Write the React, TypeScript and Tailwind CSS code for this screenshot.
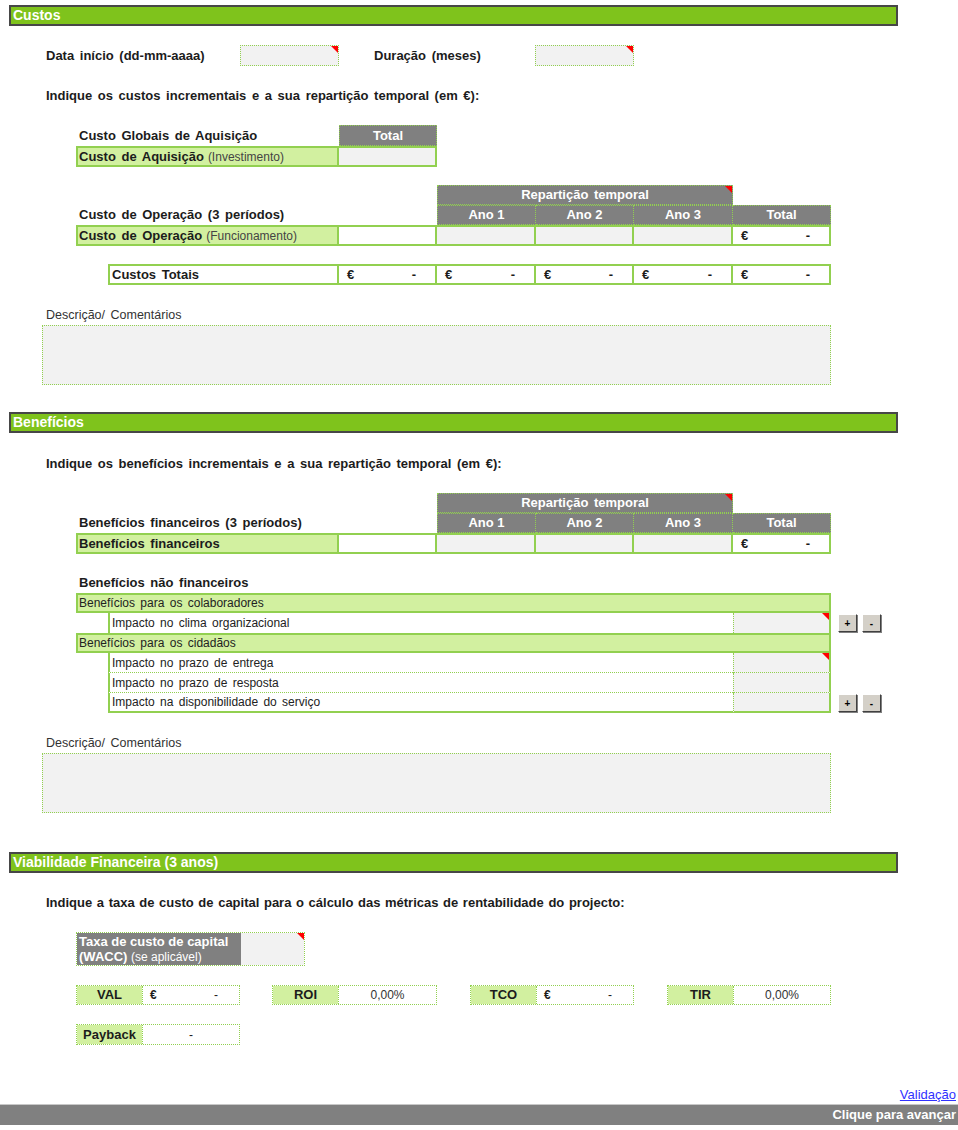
const Tri = () => (
  <span className="absolute right-0 top-0 h-0 w-0 border-l-[7px] border-t-[7px] border-l-transparent border-t-[#ff0000]" />
);

const SectionBar = ({ title, className }: { title: string; className: string }) => (
  <div
    className={`ml-[9px] flex h-[21px] w-[889px] items-center border-2 border-[#474747] bg-[#7fc31c] pl-[2px] text-[14px] font-bold text-white [word-spacing:0px] ${className}`}
  >
    {title}
  </div>
);

const Euro = ({ w }: { w: string }) => (
  <div
    className={`flex h-full items-center justify-between border-y-2 border-r-2 border-[#92d050] bg-white pl-[8px] pr-[19px] text-[13px] font-bold ${w}`}
  >
    <span>€</span>
    <span>-</span>
  </div>
);

const Repart = ({ className }: { className: string }) => (
  <div className={`flex h-[20px] ${className}`}>
    <div className="w-[361px]" />
    <div className="relative flex w-[296px] items-center justify-center border border-dotted border-[#92d050] bg-[#808080] text-[13px] font-bold text-white">
      Repartição temporal
      <Tri />
    </div>
  </div>
);

const AnoRow = ({ label }: { label: string }) => (
  <div className="flex h-[20px]">
    <div className="flex w-[361px] items-center pl-[3px] text-[13px] font-bold">{label}</div>
    {["Ano 1", "Ano 2", "Ano 3", "Total"].map((t, i) => (
      <div
        key={t}
        className={`flex items-center justify-center border-y border-r border-dotted border-[#92d050] bg-[#808080] text-[13px] font-bold text-white [word-spacing:0px] ${
          i === 0 ? "w-[99px] border-l" : i === 2 ? "w-[99px]" : "w-[98px]"
        }`}
      >
        {t}
      </div>
    ))}
  </div>
);

const GrayCell = ({ w }: { w: string }) => (
  <div className={`h-full border-y-2 border-r-2 border-[#92d050] bg-[#f2f2f2] ${w}`} />
);

const Descricao = ({ className }: { className: string }) => (
  <>
    <div className={`ml-[46px] flex h-[15px] items-center text-[12.5px] text-[#333] ${className}`}>
      Descrição/ Comentários
    </div>
    <div className="ml-[42px] mt-[2px] h-[60px] w-[789px] border border-dotted border-[#92d050] bg-[#f2f2f2]" />
  </>
);

const PlusMinus = () => (
  <div className="ml-[7px] flex gap-[5px] pt-[1px]">
    {["+", "-"].map((s) => (
      <div
        key={s}
        className="flex h-[18px] w-[19px] items-center justify-center border border-b-[#404040] border-l-white border-r-[#404040] border-t-white bg-[#d4d0c8] pt-[1px] text-[10px] font-bold leading-none text-black shadow-[1px_1px_0_#808080]"
      >
        {s}
      </div>
    ))}
  </div>
);

const GreenRow = ({ text }: { text: string }) => (
  <div className="flex h-[20px] w-[755px] items-center border-2 border-[#92d050] bg-[#d2f0a0] pl-[1px] text-[12px] text-[#222]">
    {text}
  </div>
);

const ItemRow = ({ text, tri, bottom }: { text: string; tri?: boolean; bottom: string }) => (
  <div className="flex h-[20px] w-[755px]">
    <div className="w-[32px]" />
    <div
      className={`flex flex-1 items-center border-l-2 border-[#92d050] pl-[2px] text-[12px] text-[#222] ${bottom}`}
    >
      {text}
    </div>
    <div
      className={`relative w-[98px] border-l border-r-2 border-[#92d050] bg-[#f2f2f2] [border-left-style:dotted] ${bottom}`}
    >
      {tri && <Tri />}
    </div>
  </div>
);

const Metric = ({
  label,
  value,
  lw,
  vw,
  className,
}: {
  label: string;
  value: React.ReactNode;
  lw: string;
  vw: string;
  className?: string;
}) => (
  <div className={`flex h-full border border-dotted border-[#92d050] ${className ?? ""}`}>
    <div className={`flex items-center justify-center bg-[#d2f0a0] text-[13px] font-bold ${lw}`}>{label}</div>
    <div className={`flex items-center border-l border-dotted border-[#92d050] bg-white text-[12px] ${vw}`}>
      {value}
    </div>
  </div>
);

const EuroVal = () => (
  <div className="flex w-full items-center justify-between pl-[7px] pr-[21px]">
    <span className="font-bold">€</span>
    <span>-</span>
  </div>
);

const Pct = () => <div className="w-full text-center text-[#333]">0,00%</div>;

const dotBottom = "border-b border-[#92d050] [border-bottom-style:dotted]";

export default function App() {
  return (
    <div className="flex h-[1130px] w-[958px] flex-col bg-white font-['Liberation_Sans',Arial,sans-serif] text-[#1c1c1c] [word-spacing:2px]">
      <SectionBar title="Custos" className="mt-[5px]" />

      <div className="ml-[46px] mt-[19px] flex h-[21px] items-center text-[13px] font-bold">
        <div className="w-[194px]">Data início (dd-mm-aaaa)</div>
        <div className="relative h-full w-[99px] border border-dotted border-[#92d050] bg-[#f2f2f2]">
          <Tri />
        </div>
        <div className="w-[35px]" />
        <div className="w-[161px]">Duração (meses)</div>
        <div className="relative h-full w-[99px] border border-dotted border-[#92d050] bg-[#f2f2f2]">
          <Tri />
        </div>
      </div>

      <div className="ml-[46px] mt-[22px] flex h-[16px] items-center text-[13px] font-bold">
        Indique os custos incrementais e a sua repartição temporal (em €):
      </div>

      <div className="ml-[76px] mt-[21px] flex h-[21px]">
        <div className="flex w-[263px] items-end pb-[1px] pl-[3px] text-[13px] font-bold">Custo Globais de Aquisição</div>
        <div className="flex w-[98px] items-center justify-center border border-dotted border-[#92d050] bg-[#808080] text-[13px] font-bold text-white">
          Total
        </div>
      </div>
      <div className="ml-[76px] flex h-[21px]">
        <div className="flex h-full w-[263px] items-center border-2 border-[#92d050] bg-[#d2f0a0] pl-[1px] text-[13px] font-bold">
          Custo de Aquisição
          <span className="ml-[4px] text-[12px] font-normal text-[#444]">(Investimento)</span>
        </div>
        <GrayCell w="w-[98px]" />
      </div>

      <Repart className="ml-[76px] mt-[18px]" />
      <div className="ml-[76px]">
        <AnoRow label="Custo de Operação (3 períodos)" />
      </div>
      <div className="ml-[76px] flex h-[21px]">
        <div className="flex h-full w-[263px] items-center border-2 border-[#92d050] bg-[#d2f0a0] pl-[1px] text-[13px] font-bold">
          Custo de Operação
          <span className="ml-[4px] text-[12px] font-normal text-[#444]">(Funcionamento)</span>
        </div>
        <div className="h-full w-[98px] border-y-2 border-r-2 border-[#92d050] bg-white" />
        <GrayCell w="w-[99px]" />
        <GrayCell w="w-[98px]" />
        <GrayCell w="w-[99px]" />
        <Euro w="w-[98px]" />
      </div>

      <div className="ml-[108px] mt-[18px] flex h-[21px]">
        <div className="flex h-full w-[231px] items-center border-2 border-[#92d050] pl-[2px] text-[13px] font-bold">
          Custos Totais
        </div>
        <Euro w="w-[98px]" />
        <Euro w="w-[99px]" />
        <Euro w="w-[98px]" />
        <Euro w="w-[99px]" />
        <Euro w="w-[98px]" />
      </div>

      <Descricao className="mt-[23px]" />

      <SectionBar title="Benefícios" className="mt-[27px]" />

      <div className="ml-[46px] mt-[23px] flex h-[16px] items-center text-[13px] font-bold">
        Indique os benefícios incrementais e a sua repartição temporal (em €):
      </div>

      <Repart className="ml-[76px] mt-[21px]" />
      <div className="ml-[76px]">
        <AnoRow label="Benefícios financeiros (3 períodos)" />
      </div>
      <div className="ml-[76px] flex h-[21px]">
        <div className="flex h-full w-[263px] items-center border-2 border-[#92d050] bg-[#d2f0a0] pl-[1px] text-[13px] font-bold">
          Benefícios financeiros
        </div>
        <div className="h-full w-[98px] border-y-2 border-r-2 border-[#92d050] bg-white" />
        <GrayCell w="w-[99px]" />
        <GrayCell w="w-[98px]" />
        <GrayCell w="w-[99px]" />
        <Euro w="w-[98px]" />
      </div>

      <div className="ml-[79px] mt-[21px] flex h-[16px] items-center text-[13px] font-bold">
        Benefícios não financeiros
      </div>
      <div className="ml-[76px] mt-[2px] flex flex-col">
        <GreenRow text="Benefícios para os colaboradores" />
        <div className="flex">
          <ItemRow text="Impacto no clima organizacional" tri bottom="" />
          <PlusMinus />
        </div>
        <GreenRow text="Benefícios para os cidadãos" />
        <ItemRow text="Impacto no prazo de entrega" tri bottom={dotBottom} />
        <ItemRow text="Impacto no prazo de resposta" bottom={dotBottom} />
        <div className="flex">
          <ItemRow text="Impacto na disponibilidade do serviço" bottom="border-b-2 border-[#92d050]" />
          <PlusMinus />
        </div>
      </div>

      <Descricao className="mt-[23px]" />

      <SectionBar title="Viabilidade Financeira (3 anos)" className="mt-[39px]" />

      <div className="ml-[46px] mt-[22px] flex h-[16px] items-center text-[13px] font-bold [word-spacing:1px]">
        Indique a taxa de custo de capital para o cálculo das métricas de rentabilidade do projecto:
      </div>

      <div className="ml-[76px] mt-[21px] flex h-[34px] w-[229px] border border-dotted border-[#92d050]">
        <div className="flex w-[164px] flex-col justify-center bg-[#808080] pl-[2px] text-[13px] font-bold leading-[15px] text-white [word-spacing:0px]">
          <span>Taxa de custo de capital</span>
          <span>
            (WACC) <span className="text-[12px] font-normal">(se aplicável)</span>
          </span>
        </div>
        <div className="relative flex-1 bg-[#f2f2f2]">
          <Tri />
        </div>
      </div>

      <div className="ml-[76px] mt-[19px] flex h-[20px]">
        <Metric label="VAL" value={<EuroVal />} lw="w-[65px]" vw="w-[97px]" />
        <Metric label="ROI" value={<Pct />} lw="w-[65px]" vw="w-[98px]" className="ml-[32px]" />
        <Metric label="TCO" value={<EuroVal />} lw="w-[65px]" vw="w-[97px]" className="ml-[33px]" />
        <Metric label="TIR" value={<Pct />} lw="w-[65px]" vw="w-[97px]" className="ml-[33px]" />
      </div>

      <div className="ml-[76px] mt-[19px] flex h-[21px]">
        <Metric label="Payback" value={<div className="w-full text-center">-</div>} lw="w-[65px]" vw="w-[97px]" />
      </div>

      <div className="mt-[42px] flex h-[16px] items-center justify-end pr-[2px] text-[13px]">
        <a href="#" className="text-[#3030ff] underline">
          Validação
        </a>
      </div>
      <div className="mt-[1px] flex h-[21px] w-full items-center justify-end border-t border-[#c8c8c8] bg-[#808080] pr-[2px] text-[13px] font-bold text-white [word-spacing:0px]">
        Clique para avançar
      </div>
    </div>
  );
}
